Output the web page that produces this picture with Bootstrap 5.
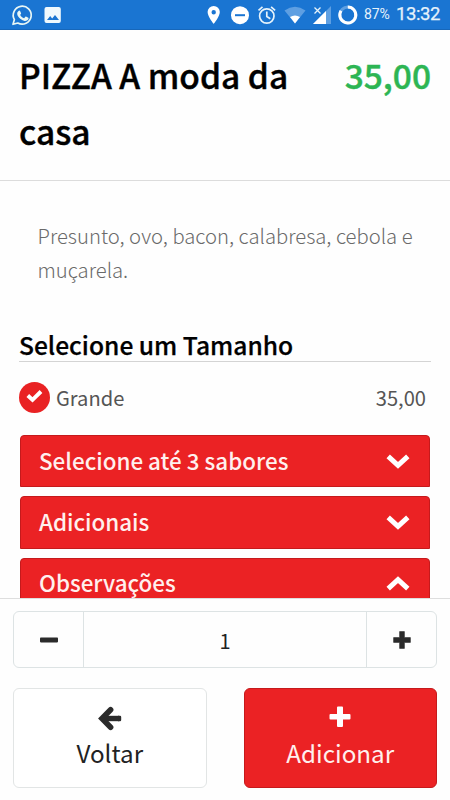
<!DOCTYPE html>
<html lang="pt-BR">
<head>
<meta charset="utf-8">
<meta name="viewport" content="width=device-width, initial-scale=1">
<title>PIZZA A moda da casa</title>
<link href="https://cdn.jsdelivr.net/npm/bootstrap@5.3.0/dist/css/bootstrap.min.css" rel="stylesheet">
<style>
  body { font-family: "Noto Sans CJK SC", "Open Sans", sans-serif; color: #000; }
  .screen { height: 800px; width: 450px; background: #fefefe; }
  .statusbar { height: 30px; background: #1a75d2; border-bottom: 1px solid #1767ba; font-family: Roboto, sans-serif; color: #e6f2fb; }
  .statusbar svg { flex: none; }
  .battery { font-size: 14px; line-height: 31px; width: 32px; padding-left: 6px; letter-spacing: -.1px; }
  .clock { font-size: 18.5px; line-height: 31px; -webkit-text-stroke: .25px; width: 54px; letter-spacing: -.4px; }
  .title-row { height: 151px; padding: 17px 19px 0; border-bottom: 1px solid #dcdcdc; }
  .title-row h1 { font-size: 33.5px; line-height: 56px; font-weight: 500; width: 290px; -webkit-text-stroke: .4px; }
  .title-row .price { font-size: 33.5px; line-height: 56px; font-weight: 500; color: #2db553; -webkit-text-stroke: .4px; }
  .descr { margin: 38px 19px 0 37.5px; font-size: 20.25px; line-height: 33.7px; font-weight: 300; color: #6a6a6a; }
  .section-title { margin: 41.6px 19px 0; height: 34px; font-size: 24.6px; line-height: 33px; font-weight: 500; border-bottom: 1px solid #d4d4d4; -webkit-text-stroke: .25px; }
  .option { margin: 16px 24px 0 19px; height: 38px; font-size: 20.1px; color: #555; }
  .option .label-text { padding-top: 2px; }
  .tick { width: 31px; height: 31px; background: #e92223; margin-right: 6px; }
  .panels { margin: 19px 20px 0; gap: 9px; }
  .panel-head { height: 52.3px; padding: 0 19px 0 18px; border: 1px solid #c51a1c; border-radius: 4px 4px 0 0; background: #eb2224; color: #fff0ee; font-size: 22.4px; font-weight: 500; }
  .panel-head span { margin-bottom: 3px; line-height: 32px; }
  .actions { height: 202px; border-top: 1px solid #dedede; background: #fefefe; padding: 12px 13px 0; }
  .qty { height: 57px; border: 1px solid #dde3e4; border-radius: 6px; font-size: 20px; }
  .qty .step { width: 69px; }
  .qty .count { border-left: 1px solid #dde3e4; border-right: 1px solid #dde3e4; color: #222; padding-top: 3px; }
  .big { width: 193.5px; height: 100px; border-radius: 6px; font-size: 24.2px; line-height: 36px; padding: 0; }
  .big svg { display: block; margin: 0 auto 4px; }
  .back { border: 1px solid #e2e5e5; color: #222; background: #fff; }
  .add { border: 1px solid #c51a1c; background: #eb2224; color: #fff0ee; }
</style>
</head>
<body>
<div class="screen d-flex flex-column overflow-hidden">
  <header class="statusbar d-flex align-items-center flex-shrink-0">
    <svg width="205" height="29" viewBox="0 0 205 29" fill="none">
      <path d="M13 24.3l1.4-4.7a9 9 0 1 1 3.400 3.400z" stroke="#e9f7f5" stroke-width="1.700" stroke-linejoin="round"/>
      <path d="M18.300 11.200c.7-.8 1.500-.8 1.900 0l.9 2.100c.1.500-.6 1.200-.9 1.600 1 1.800 2.100 2.700 3.900 3.400l1.300-1.500c.3-.3.600-.2 1 0l1.900 1c.4.200.3 1-.1 1.700-.8 1.200-2.500 1.700-4.200 1.200-3.600-1.100-6.800-4.200-6.800-7.200 0-1 .5-1.800 1.100-2.300z" fill="#e9f7f5"/>
      <path fill-rule="evenodd" d="M46.500 7h12.300q2 0 2 2v12q0 2-2 2H46.500q-2 0-2-2V9q0-2 2-2zM47 20h12l-4-5-2.800 3.500-2-2.500z" fill="#f0f9fd"/>
    </svg>
    <svg width="153" height="29" viewBox="205 0 153 29" fill="none">
      <path fill-rule="evenodd" d="M213.700 6a6.100 6.100 0 0 1 6.100 6.100c0 4.600-6.100 11.900-6.100 11.900s-6.100-7.300-6.100-11.900A6.100 6.100 0 0 1 213.700 6zm0 4a2.200 2.200 0 1 0 0 4.400 2.200 2.200 0 0 0 0-4.400z" fill="#fff"/>
      <circle cx="240" cy="15.200" r="9" fill="#fff"/><path d="M235 15.200h10" stroke="#1a75d2" stroke-width="2"/>
      <g stroke="#e6f3fb" stroke-width="1.700"><circle cx="266.800" cy="16" r="7.200"/><path d="M266.800 11.500v5l3.500 2.200M258.500 10.300l4-3.400M275.100 10.300l-4-3.400"/></g>
      <path d="M284.500 10.400Q295 3 305.500 10.400L295 23.500z" fill="#5e9fe2"/>
      <path d="M290 17q5-3 10 0l-5 6.500z" fill="#fff"/>
      <path d="M331 6v18h-18z" fill="#5e9fe2"/><path d="M326 11v13h-13z" fill="#fff"/>
      <path d="M311 6h11v6l-5 4h-6z" fill="#1a75d2"/><path d="M314.500 7.500l6 6M320.500 7.500l-6 6" stroke="#e6f3fb" stroke-width="1.300"/>
      <circle cx="347.800" cy="15" r="8" stroke="#5e9fe2" stroke-width="3"/>
      <path d="M347.800 7a8 8 0 1 1-6.800 3.800" stroke="#fff" stroke-width="3"/>
    </svg>
    <span class="battery">87%</span>
    <span class="clock ms-auto">13:32</span>
  </header>

  <main class="flex-grow-1 overflow-hidden">
    <div class="title-row d-flex justify-content-between">
      <h1 class="m-0">PIZZA A moda da casa</h1>
      <span class="price">35,00</span>
    </div>
    <p class="descr mb-0">Presunto, ovo, bacon, calabresa, cebola e muçarela.</p>
    <h2 class="section-title mb-0">Selecione um Tamanho</h2>
    <div class="option d-flex align-items-center">
      <span class="tick rounded-circle d-flex align-items-center justify-content-center">
        <svg width="17" height="17" viewBox="0 0 17 17"><path d="M1.800 6.500l4.700 4.400 8.500-8.400" fill="none" stroke="#fff" stroke-width="3.900"/></svg>
      </span>
      <span class="label-text">Grande</span>
      <span class="label-text ms-auto">35,00</span>
    </div>
    <div class="panels d-flex flex-column">
      <div class="panel-head d-flex align-items-center justify-content-between flex-shrink-0">
        <span>Selecione até 3 sabores</span>
        <svg width="24" height="16" viewBox="0 0 24 16"><path d="M2.200 3.300l9.800 9 9.800-9" fill="none" stroke="#fff" stroke-width="5"/></svg>
      </div>
      <div class="panel-head d-flex align-items-center justify-content-between flex-shrink-0">
        <span>Adicionais</span>
        <svg width="24" height="16" viewBox="0 0 24 16"><path d="M2.200 3.300l9.800 9 9.800-9" fill="none" stroke="#fff" stroke-width="5"/></svg>
      </div>
      <div class="panel-head d-flex align-items-center justify-content-between flex-shrink-0">
        <span>Observações</span>
        <svg width="24" height="16" viewBox="0 0 24 16"><path d="M2.200 12.700l9.800-9 9.800 9" fill="none" stroke="#fff" stroke-width="5"/></svg>
      </div>
    </div>
  </main>

  <footer class="actions flex-shrink-0">
    <div class="qty d-flex">
      <div class="step d-flex align-items-center justify-content-center"><svg width="18" height="18" viewBox="0 0 18 18"><rect y="6.600" width="18" height="4.800" rx=".8" fill="#2b2b2b"/></svg></div>
      <div class="count flex-grow-1 d-flex align-items-center justify-content-center">1</div>
      <div class="step d-flex align-items-center justify-content-center"><svg width="18" height="18" viewBox="0 0 18 18"><path d="M6.600.6h4.800v6h6v4.800h-6v6H6.600v-6h-6V6.600h6z" fill="#2b2b2b" stroke="#2b2b2b" stroke-width=".6" stroke-linejoin="round"/></svg></div>
    </div>
    <div class="d-flex justify-content-between mt-3 pt-1">
      <button type="button" class="big back">
        <svg width="24" height="26" viewBox="0 0 24 26"><path d="M12.600 4.800L4 13.500l8.600 8.700" fill="none" stroke="#2b2b2b" stroke-width="5.600" stroke-linecap="round"/><path d="M5 13.500h16" fill="none" stroke="#2b2b2b" stroke-width="5.400"/><path d="M20 10.800h2q1.200 0 1.200 1.200v3q0 1.200-1.200 1.200h-2z" fill="#2b2b2b"/></svg>Voltar
      </button>
      <button type="button" class="big add">
        <svg width="24" height="26" viewBox="0 0 24 26"><path d="M10 1.500h4q1 0 1 1V9h6.500q1 0 1 1v3.600q0 1-1 1H15v6.500q0 1-1 1h-4q-1 0-1-1v-6.500H2.500q-1 0-1-1V10q0-1 1-1H9V2.500q0-1 1-1z" fill="#fff"/></svg>Adicionar
      </button>
    </div>
  </footer>
</div>
<script src="https://cdn.jsdelivr.net/npm/bootstrap@5.3.0/dist/js/bootstrap.bundle.min.js"></script>
</body>
</html>
